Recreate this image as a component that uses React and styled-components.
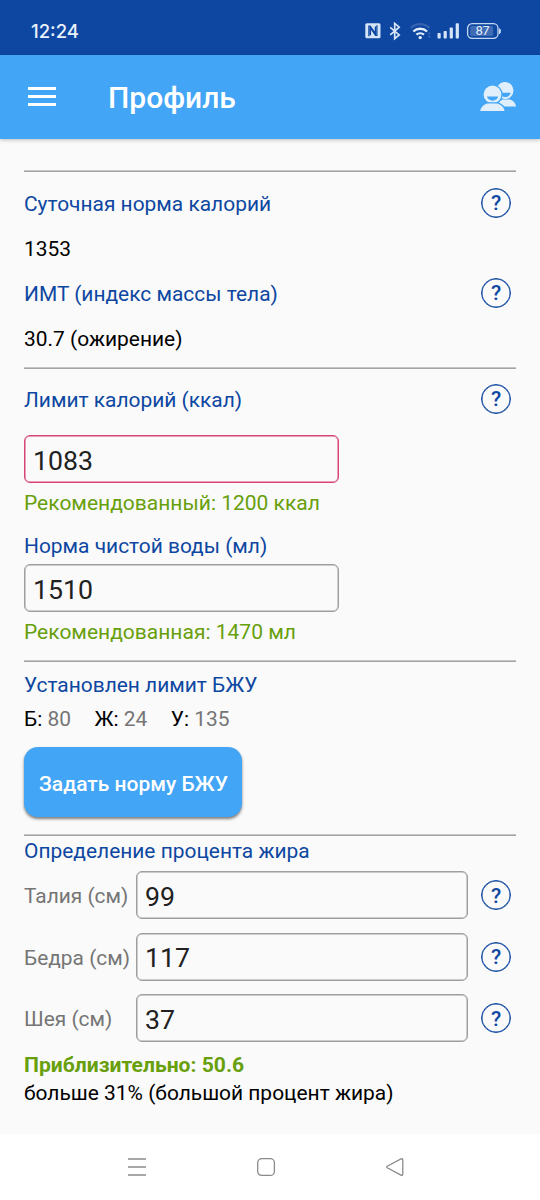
import React from "react";
import styled, { createGlobalStyle } from "styled-components";

const GlobalStyle = createGlobalStyle`
  * {
    box-sizing: border-box;
  }
  body {
    margin: 0;
    background: #fafafa;
    font-family: Roboto, sans-serif;
  }
`;

const measurements = [
  { label: "Талия (см)", value: "99" },
  { label: "Бедра (см)", value: "117" },
  { label: "Шея (см)", value: "37" },
];

function Help() {
  return <HelpButton>?</HelpButton>;
}

function StatusIcons() {
  return (
    <svg width="140" height="20" viewBox="0 0 140 20" fill="none">
      {/* nfc */}
      <rect x="1.3" y="1.3" width="15.2" height="15" rx="1.5" fill="#d6e4f8" />
      <path
        d="M4.9 14.2V4.2h1.3l5.2 7.4V4.5M12.9 3.3v10.1h-1.300L6.400 6v7.300"
        stroke="#0d47a1"
        strokeWidth="1.3"
      />
      {/* bluetooth */}
      <path
        d="M26.2 5.3l9 7.6-4.5 3.8V1.4l4.5 3.8-9 7.7"
        stroke="#d6e4f8"
        strokeWidth="1.7"
      />
      {/* wifi */}
      <path d="M46.8 6a13.4 13.4 0 0 1 18.8 0" stroke="#3562b1" strokeWidth="2.2" />
      <path d="M49.3 9.5a10 10 0 0 1 13.8 0" stroke="#e6effb" strokeWidth="2.3" />
      <path d="M52.4 12.7a5.8 5.8 0 0 1 7.6 0" stroke="#e6effb" strokeWidth="2.2" />
      <circle cx="56.2" cy="15.6" r="1.7" fill="#e6effb" />
      <path d="M63.4 12.3l1.9-2.5 1.9 2.5zM63.4 13.7l1.9 2.5 1.9-2.5z" fill="#3562b1" />
      {/* signal */}
      <rect x="73.5" y="11" width="3.2" height="5.5" rx="0.8" fill="#d6e4f8" />
      <rect x="79.6" y="9" width="3.2" height="7.5" rx="0.8" fill="#d6e4f8" />
      <rect x="85.7" y="5.5" width="3.2" height="11" rx="0.8" fill="#d6e4f8" />
      <rect x="91.7" y="1.3" width="3.2" height="15.2" rx="0.8" fill="#d6e4f8" />
      {/* battery */}
      <rect x="103.6" y="1.7" width="30.4" height="14.6" rx="4.5" stroke="#c3d6f2" strokeWidth="1.3" />
      <rect x="106.2" y="4" width="23" height="10" rx="1.5" fill="#3f6cb5" />
      <path d="M135.5 6.7c1.3.5 1.3 4.5 0 5z" fill="#c3d6f2" stroke="#c3d6f2" />
      <text
        x="118.5"
        y="13.4"
        textAnchor="middle"
        fontSize="12"
        fontFamily="Inter, sans-serif"
        fill="#e9f1fc"
      >
        87
      </text>
    </svg>
  );
}

function PeopleIcon() {
  return (
    <svg width="38" height="32" viewBox="0 0 38 32" fill="#e1effc">
      <circle cx="26" cy="9.5" r="8.5" />
      <path d="M18.5 25.5c.5-4.5 3.5-6.2 5.5-6.9h7c3 .8 5.6 3.6 6 6.9z" />
      <path d="M20 11.8h11.7c-.6 2.6-3 4.3-5.7 4.3-2.7 0-5.2-1.7-6-4.3z" fill="#42a5f5" />
      <g stroke="#42a5f5" strokeWidth="2.4" paintOrder="stroke">
        <circle cx="13.5" cy="13.5" r="8.9" />
        <path d="M1.2 30c.6-4.2 4-6.8 7.4-7.5h9.6c3.5.8 6.8 3.5 7.3 7.5z" />
      </g>
      <path d="M8 15.6h11.2c-.6 2.4-3 4.1-5.6 4.1s-5-1.7-5.6-4.1z" fill="#42a5f5" />
    </svg>
  );
}

function App() {
  return (
    <Screen>
      <GlobalStyle />
      <StatusBar>
        <Clock>12:24</Clock>
        <StatusIcons />
      </StatusBar>
      <AppBar>
        <MenuButton>
          <i />
          <i />
          <i />
        </MenuButton>
        <Title>Профиль</Title>
        <PeopleIcon />
      </AppBar>
      <Content>
        <Divider />
        <Summary>
          <Row>
            <Label>Суточная норма калорий</Label>
            <Help />
          </Row>
          <Row>
            <Value>1353</Value>
          </Row>
          <Row>
            <Label>ИМТ (индекс массы тела)</Label>
            <Help />
          </Row>
          <Row>
            <Value>30.7 (ожирение)</Value>
          </Row>
        </Summary>
        <Divider />
        <Limits>
          <Row>
            <Label>Лимит калорий (ккал)</Label>
            <Help />
          </Row>
          <Field $error $gap="13px" defaultValue="1083" />
          <Hint>Рекомендованный: 1200 ккал</Hint>
          <Label>Норма чистой воды (мл)</Label>
          <Field $gap="4px" defaultValue="1510" />
          <Hint>Рекомендованная: 1470 мл</Hint>
        </Limits>
        <Divider />
        <Macros>
          <Label>Установлен лимит БЖУ</Label>
          <MacroRow>
            <Value>
              Б: <span>80</span>
            </Value>
            <Value>
              Ж: <span>24</span>
            </Value>
            <Value>
              У: <span>135</span>
            </Value>
          </MacroRow>
          <SubmitButton>Задать норму БЖУ</SubmitButton>
        </Macros>
        <Divider />
        <BodyFat>
          <Label>Определение процента жира</Label>
          {measurements.map((item) => (
            <MeasureRow key={item.label}>
              <MeasureLabel>{item.label}</MeasureLabel>
              <Field $wide defaultValue={item.value} />
              <Help />
            </MeasureRow>
          ))}
          <Result>Приблизительно: 50.6</Result>
          <Value>больше 31% (большой процент жира)</Value>
        </BodyFat>
      </Content>
      <NavBar>
        <svg width="20" height="20" viewBox="0 0 20 20" stroke="#8a8a8a" strokeWidth="1.3">
          <path d="M1 2h18M1 10h18M1 18h18" />
        </svg>
        <svg width="20" height="20" viewBox="0 0 20 20" fill="none" stroke="#8a8a8a" strokeWidth="1.3">
          <rect x="1.7" y="1.7" width="16.7" height="16.7" rx="4" />
        </svg>
        <svg width="20" height="20" viewBox="0 0 20 20" fill="none" stroke="#8a8a8a" strokeWidth="1.3">
          <path d="M2.2 9.3L16 1.9q1.8-.6 1.8 1.2v13.8q0 1.8-1.8 1.2L2.2 10.7q-1-.7 0-1.4z" />
        </svg>
      </NavBar>
    </Screen>
  );
}

const Screen = styled.div`
  display: flex;
  flex-direction: column;
  width: 540px;
  height: 1200px;
  overflow: hidden;
  background: #fafafa;
`;

const StatusBar = styled.header`
  display: flex;
  align-items: center;
  justify-content: space-between;
  flex: none;
  height: 55px;
  padding: 8px 36px 0 31px;
  background: #0d47a1;
`;

const Clock = styled.span`
  margin-top: -1px;
  color: #e9f1fc;
  font-family: Inter, sans-serif;
  font-size: 18.5px;
  font-weight: 500;
`;

const AppBar = styled.div`
  display: flex;
  align-items: center;
  flex: none;
  height: 84px;
  padding: 0 23px 0 28px;
  background: #42a5f5;
  box-shadow: 0 1px 4px rgba(0, 0, 0, 0.25);
`;

const MenuButton = styled.div`
  display: flex;
  flex-direction: column;
  gap: 5px;
  width: 28px;
  margin-top: -1px;
  i {
    height: 3px;
    background: white;
  }
`;

const Title = styled.h1`
  flex: 1;
  margin: 1px 0 0 52px;
  color: white;
  font-size: 30px;
  font-weight: 500;
`;

const Content = styled.main`
  flex: 1;
  padding: 31px 24px 0;
`;

const Divider = styled.hr`
  height: 2px;
  margin: 0;
  border: none;
  background: linear-gradient(#c4c4c4 50%, #a4a4a4 50%);
`;

const Summary = styled.section`
  padding: 9px 0 5px;
  height: 195px;
`;

const Row = styled.div`
  display: flex;
  align-items: center;
  justify-content: space-between;
  height: 45px;
  padding-right: 5px;
`;

const Label = styled.div`
  color: #0d47a1;
  font-size: 20.93px;
  line-height: 28px;
`;

const Value = styled.div`
  color: #000;
  font-size: 20.95px;
  line-height: 28px;
  span {
    color: #757575;
  }
`;

const HelpButton = styled.div`
  display: flex;
  align-items: center;
  justify-content: center;
  flex: none;
  width: 30px;
  height: 30px;
  margin-top: -2px;
  padding-top: 1px;
  border: 1px solid #0d47a1;
  border-radius: 50%;
  box-shadow: inset 0 0 0 0.5px #0d47a1;
  color: #0d47a1;
  font-size: 21px;
  font-weight: 500;
  line-height: 28px;
`;

const Limits = styled.section`
  height: 291px;
  padding-top: 8px;
`;

const Field = styled.input`
  display: block;
  width: ${(props) => (props.$wide ? "332px" : "315px")};
  height: 48px;
  margin: ${(props) => props.$gap || 0} 0 0;
  padding: 3px 8px 0;
  border: 1px solid ${(props) => (props.$error ? "#d8437a" : "#9e9e9e")};
  border-radius: 6px;
  outline: none;
  background: transparent;
  box-shadow: inset 0 0 0 0.5px
    ${(props) => (props.$error ? "#d8437a" : "#9e9e9e")};
  color: #212121;
  font-family: Roboto, sans-serif;
  font-size: 26.7px;
`;

const Hint = styled.div`
  height: 43px;
  padding-top: 6px;
  margin-bottom: 6px;
  color: #689f0c;
  font-size: 21px;
  line-height: 28px;
`;

const Macros = styled.section`
  height: 172px;
  padding-top: 9px;
`;

const MacroRow = styled.div`
  display: flex;
  gap: 23.5px;
  margin-top: 6px;
`;

const SubmitButton = styled.button`
  display: block;
  width: 218px;
  height: 70px;
  margin-top: 14px;
  padding: 3px 0 0 1px;
  border: none;
  border-radius: 14px;
  background: #42a5f5;
  box-shadow: 0 2px 3px rgba(0, 0, 0, 0.5);
  color: white;
  font-family: Roboto, sans-serif;
  font-size: 21px;
  font-weight: 500;
`;

const BodyFat = styled.section`
  padding-top: 1px;
`;

const MeasureRow = styled.div`
  display: flex;
  align-items: center;
  height: 48px;
  margin: 6px 0 13.5px;
  & + & {
    margin-top: 0;
  }
  ${HelpButton} {
    margin: 0 0 0 13px;
  }
`;

const MeasureLabel = styled.div`
  width: 112px;
  padding-top: 2px;
  color: #757575;
  font-size: 20.9px;
  white-space: nowrap;
`;

const Result = styled.div`
  margin-top: -5px;
  color: #689f0c;
  font-size: 21.1px;
  font-weight: 700;
  line-height: 28px;
`;

const NavBar = styled.nav`
  display: flex;
  align-items: center;
  justify-content: space-between;
  flex: none;
  height: 66px;
  padding: 0 135px 0 127px;
  background: white;
`;

export default App;
